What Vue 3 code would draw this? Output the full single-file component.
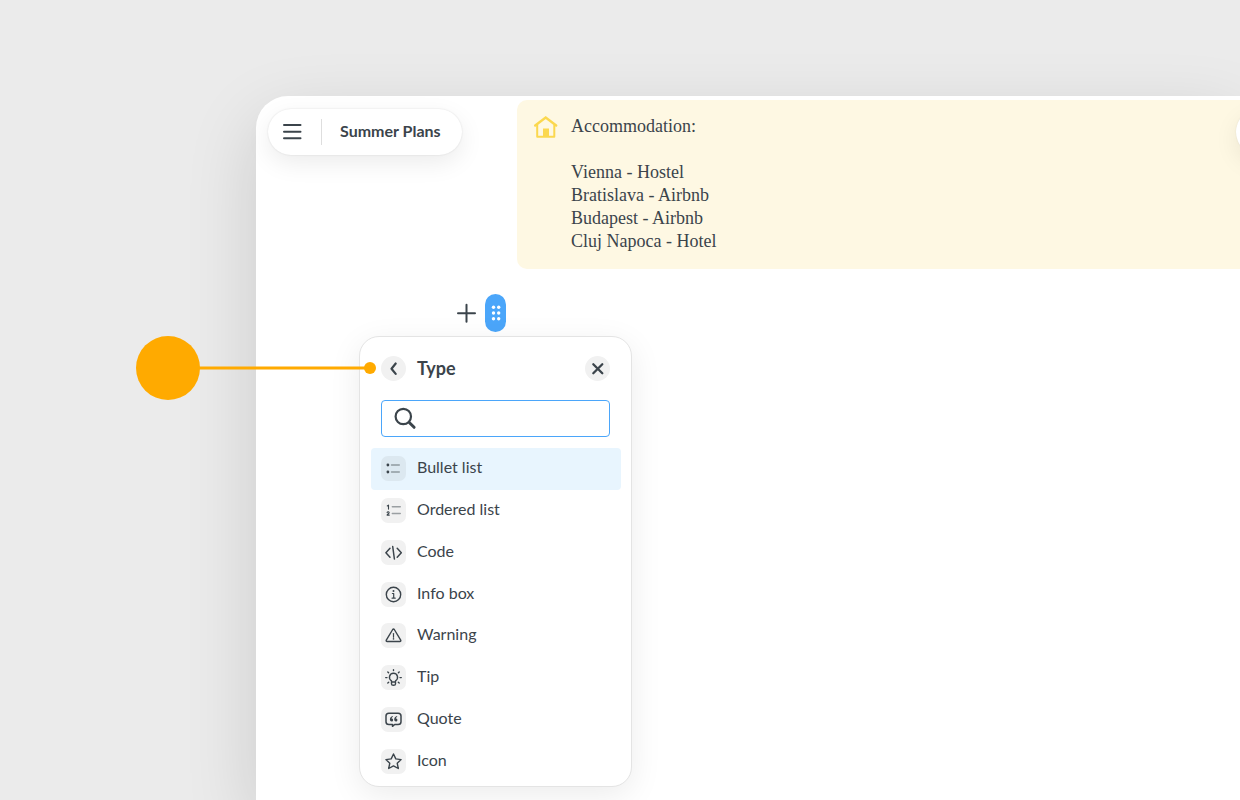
<script setup>
import { ref } from 'vue'

const query = ref('')
const selected = ref('Bullet list')
const types = ['Bullet list', 'Ordered list', 'Code', 'Info box', 'Warning', 'Tip', 'Quote', 'Icon']
const stops = ['Vienna - Hostel', 'Bratislava - Airbnb', 'Budapest - Airbnb', 'Cluj Napoca - Hotel']
</script>

<template>
  <div class="page">
    <main class="window">
      <div class="top">
        <header class="title-bar">
          <button class="plain menu-button" aria-label="Menu">
            <svg width="20" height="18" viewBox="0 0 20 18" fill="none" stroke="#3b444b" stroke-width="2" stroke-linecap="round">
              <path d="M2 2h16.500M2 8.800h16.500M2 15.300h16.500" />
            </svg>
          </button>
          <h1>Summer Plans</h1>
        </header>
        <section class="note">
          <svg class="house" width="26" height="24" viewBox="0 0 26 24" fill="none" stroke="#fbd84f" stroke-width="2">
            <path d="M2.200 10.500 12.700 2.600l10.500 7.900" stroke-width="2.400" stroke-linecap="round" />
            <path d="M4.200 9.500v12.300h17.100V9.500" stroke-linejoin="round" />
            <path d="M10 13.500h6v8h-6z" fill="#fbd84f" stroke="none" />
          </svg>
          <div class="note-text">
            <p class="note-head">Accommodation:</p>
            <p v-for="stop in stops" :key="stop">{{ stop }}</p>
          </div>
        </section>
        <span class="corner-pill"></span>
      </div>

      <div class="block-tools">
        <button class="plain add" aria-label="Add block">
          <svg width="20" height="20" viewBox="0 0 20 20" fill="none" stroke="#3b444b" stroke-width="2" stroke-linecap="round">
            <path d="M10.500 1.800v17M2 10.300h17" />
          </svg>
        </button>
        <button class="plain handle" aria-label="Block options">
          <svg width="10" height="16" viewBox="0 0 10 16" fill="#fff">
            <circle cx="2.500" cy="2.300" r="1.700" /><circle cx="7.700" cy="2.300" r="1.700" />
            <circle cx="2.500" cy="8" r="1.700" /><circle cx="7.700" cy="8" r="1.700" />
            <circle cx="2.500" cy="13.700" r="1.700" /><circle cx="7.700" cy="13.700" r="1.700" />
          </svg>
        </button>

        <section class="popover" aria-label="Type">
          <div class="popover-head">
            <button class="plain round" aria-label="Back">
              <svg width="25" height="25" viewBox="0 0 25 25" fill="none" stroke="#3b444b" stroke-width="2.200" stroke-linecap="round" stroke-linejoin="round">
                <path d="M14.700 7.500l-4.200 5.200 4.200 5.200" />
              </svg>
            </button>
            <h2>Type</h2>
            <button class="plain round" aria-label="Close">
              <svg width="25" height="25" viewBox="0 0 25 25" fill="none" stroke="#3b444b" stroke-width="2.300" stroke-linecap="round">
                <path d="M8.300 8.200l9 9M17.300 8.200l-9 9" />
              </svg>
            </button>
          </div>

          <label class="search">
            <svg width="24" height="24" viewBox="0 0 24 24" fill="none" stroke="#3b444b" stroke-linecap="round">
              <circle cx="9.300" cy="9.500" r="7.700" stroke-width="2.200" />
              <path d="M15.500 15.700l4.600 4.600" stroke-width="3" />
            </svg>
            <input v-model="query" type="text" aria-label="Search types" />
          </label>

          <ul class="types">
            <li v-for="name in types" :key="name">
              <button class="plain type" :class="{ active: name === selected }" @click="selected = name">
                <span class="tile">
                  <svg width="25" height="25" viewBox="0 0 25 25" fill="none" stroke="#3b444b" stroke-width="1.400" stroke-linecap="round" stroke-linejoin="round">
                    <template v-if="name === 'Bullet list'">
                      <circle cx="6.900" cy="9" r="1.400" fill="#3b444b" stroke="none" />
                      <circle cx="6.900" cy="16" r="1.400" fill="#3b444b" stroke="none" />
                      <path d="M10.500 9h7.800M10.500 16h7.800" stroke="#8f999f" />
                    </template>
                    <template v-else-if="name === 'Ordered list'">
                      <path d="M6.300 8l1.200-.9v4M6.100 14.500c.4-1 2.200-.9 2 .3-.1.700-1.500 1.200-2 2.300h2.200" stroke-width="1.100" />
                      <path d="M11.300 8.700h8M11.300 15.500h8" stroke="#9a9fa2" />
                    </template>
                    <template v-else-if="name === 'Code'">
                      <path d="M9 8.200L4.900 12.700 9 17.200M16.200 8.200l4.100 4.500-4.100 4.500M11.700 6.500l1.700 12.500" stroke-width="1.500" />
                    </template>
                    <template v-else-if="name === 'Info box'">
                      <circle cx="12.500" cy="12.500" r="7.200" />
                      <circle cx="12.500" cy="9" r="1" fill="#3b444b" stroke="none" />
                      <path d="M11.400 11.500h1.300V16M11.100 16.200h3.100" stroke-width="1.200" />
                    </template>
                    <template v-else-if="name === 'Warning'">
                      <path d="M11.700 6.500q.8-1.100 1.600 0l6.400 10.600q.5 1.300-.9 1.400H6.200q-1.400-.1-.9-1.400z" />
                      <path d="M12.500 10.600v3.600" stroke-width="1.200" />
                      <circle cx="12.500" cy="15.900" r=".8" fill="#3b444b" stroke="none" />
                    </template>
                    <template v-else-if="name === 'Tip'">
                      <path d="M10.500 17v-1.100C7 13.700 8.200 8.200 12.500 8.200s5.500 5.500 2 7.700V17zM10.500 17.200v1.700q0 1.200 2 1.400 2-.2 2-1.400v-1.700" />
                      <path d="M12.500 4.800v.8M6.800 7l.8.800M18.200 7l-.8.800M4.700 12.600H6M19 12.600h1.300M6.800 18.100l.9-.8M18.200 18.100l-.9-.8" />
                    </template>
                    <template v-else-if="name === 'Quote'">
                      <path d="M7.900 6.200h9.200q2.900 0 2.900 2.800v5.700q0 2.800-2.900 2.800h-3.400l-2.200 1.800v-1.800H7.900Q5 17.500 5 14.700V9q0-2.800 2.900-2.800z" stroke-width="1.500" />
                      <path d="M11.800 9c-1.800.4-2.900 1.800-2.900 3.600 0 2.500 3.200 2.500 3.200.3 0-.9-.7-1.500-1.600-1.400.2-.8.600-1.400 1.400-1.700zM16.100 9c-1.800.4-2.900 1.800-2.900 3.600 0 2.500 3.200 2.500 3.200.3 0-.9-.7-1.500-1.600-1.400.2-.8.600-1.400 1.400-1.700z" fill="#3b444b" stroke="none" />
                    </template>
                    <template v-else>
                      <path d="M12.500 5l2.300 4.900 5.300.7-3.900 3.600 1.100 5.300-4.800-2.600-4.800 2.600 1.100-5.300-3.900-3.600 5.300-.7z" />
                    </template>
                  </svg>
                </span>
                <span class="label">{{ name }}</span>
              </button>
            </li>
          </ul>

          <svg class="callout" width="240" height="64" viewBox="0 0 240 64" fill="#ffaa00" aria-hidden="true">
            <circle cx="32" cy="32" r="32" />
            <path d="M60 30.500h174v3H60z" />
            <circle cx="234" cy="32" r="6" />
          </svg>
        </section>
      </div>
    </main>
  </div>
</template>

<style>
body {
  margin: 0;
  background: #ebebeb;
}
</style>

<style scoped>
* {
  box-sizing: border-box;
}

.page {
  min-height: 100vh;
  padding: 96px 0 0 256px;
  overflow: hidden;
  background: #ebebeb;
  color: #3b444b;
  font-family: Lato, "Liberation Sans", sans-serif;
}

.window {
  min-height: calc(100vh - 96px);
  background: #fff;
  border-top-left-radius: 32px;
  box-shadow: 0 24px 72px rgba(0, 0, 0, 0.14);
}

h1,
h2,
p,
ul {
  margin: 0;
  padding: 0;
}

.plain {
  display: flex;
  align-items: center;
  justify-content: center;
  padding: 0;
  border: 0;
  background: none;
  color: inherit;
  font: inherit;
  cursor: pointer;
}

.top {
  position: relative;
  display: grid;
  grid-template-columns: 261px 1fr;
  align-items: start;
  padding-top: 4px;
}

.title-bar {
  display: flex;
  align-items: center;
  justify-self: start;
  height: 46px;
  margin: 9px 0 0 12px;
  padding-right: 21px;
  border-radius: 23px;
  background: #fff;
  box-shadow: 0 0 2px rgba(0, 0, 0, 0.12), 0 8px 24px rgba(0, 0, 0, 0.08);
}

.menu-button {
  width: 54px;
  height: 26px;
  padding-right: 5px;
  border-right: 1px solid #dedede;
}

h1 {
  padding: 0 0 2px 18px;
  font-size: 16px;
  font-weight: 700;
  line-height: 24px;
}

.note {
  display: flex;
  gap: 12px;
  padding: 15px 16px 16px;
  border-radius: 10px 0 0 10px;
  background: #fef8e3;
}

.note-text {
  font-family: "Liberation Serif", serif;
  font-size: 18px;
  line-height: 23px;
}

.note-head {
  margin-bottom: 23px;
}

.corner-pill {
  position: absolute;
  top: 13px;
  right: -60px;
  width: 64px;
  height: 46px;
  border-radius: 23px;
  background: #fff;
  box-shadow: 0 0 2px rgba(0, 0, 0, 0.08), 0 8px 24px rgba(0, 0, 0, 0.08);
}

.block-tools {
  position: relative;
  display: flex;
  align-items: center;
  gap: 9px;
  width: 250px;
  margin-top: 25px;
  padding-left: 200px;
}

.handle {
  width: 21px;
  height: 38px;
  border-radius: 11px;
  background: #4ba6fa;
}

.popover {
  position: absolute;
  top: 42px;
  left: 103px;
  width: 273px;
  padding: 19px 10px 4px 11px;
  border: 1px solid #e4e4e4;
  border-radius: 20px;
  background: #fff;
  box-shadow: 0 8px 32px rgba(0, 0, 0, 0.08);
}

.popover-head {
  display: flex;
  align-items: center;
  gap: 11px;
  padding: 0 11px 0 10px;
}

.round {
  width: 25px;
  height: 25px;
  border-radius: 50%;
  background: #f1f1f1;
}

h2 {
  flex: 1;
  font-size: 18px;
  font-weight: 700;
  line-height: 25px;
}

.search {
  display: flex;
  align-items: center;
  gap: 8px;
  height: 37px;
  margin: 19px 11px 11px 10px;
  padding: 0 10px 0 12px;
  border: 1px solid #4ba6fa;
  border-radius: 4px;
}

.search input {
  flex: 1;
  min-width: 0;
  border: 0;
  outline: 0;
  background: transparent;
  color: inherit;
  font: inherit;
}

.types {
  display: grid;
  grid-auto-rows: 1fr;
  min-height: 334px;
  list-style: none;
}

.type {
  justify-content: flex-start;
  gap: 11px;
  width: 100%;
  height: 100%;
  padding-left: 10px;
  border-radius: 4px;
  font-size: 16px;
}

.label {
  padding-bottom: 4px;
}

.tile {
  display: flex;
  width: 25px;
  height: 25px;
  border-radius: 7px;
  background: #f1f1f1;
}

.active {
  background: #e8f5fe;
}

.active .tile {
  background: #dce8f0;
}

.callout {
  position: absolute;
  top: -1px;
  left: -224px;
}
</style>
